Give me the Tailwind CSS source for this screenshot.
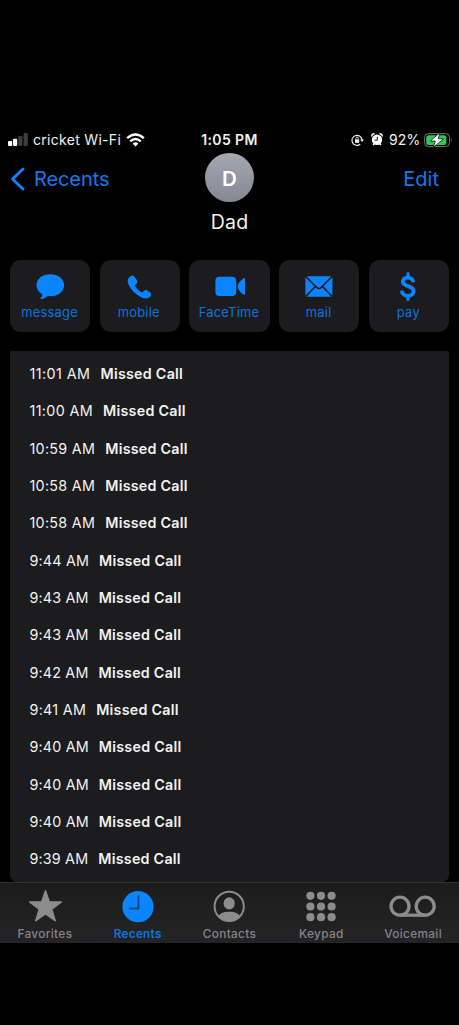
<!DOCTYPE html>
<html lang="en">
<head>
<meta charset="utf-8">
<title>Dad</title>
<script src="https://cdn.jsdelivr.net/npm/@tailwindcss/browser@4"></script>
</head>
<body class="bg-black">
<div class="w-[459px] h-[1025px] bg-black pt-[127px] flex flex-col overflow-hidden font-['Inter',sans-serif] text-[#f2f2f2]">
  <header class="h-6 shrink-0 grid grid-cols-3 items-center text-[14px] leading-6 whitespace-nowrap">
    <div class="flex items-center pl-2">
      <svg class="w-5 h-[13px] shrink-0" viewBox="0 0 20 13"><g fill="#fff"><rect x="0" y="8" width="4.2" height="5" rx="1"/><rect x="5" y="5.8" width="4.2" height="7.2" rx="1"/></g><g fill="#3c3c3c"><rect x="10.3" y="3" width="4.2" height="10" rx="1"/><rect x="15.6" y="0" width="4.2" height="13" rx="1"/></g></svg>
      <span class="ml-[5px] pt-px w-[88px] tracking-[.3px]">cricket Wi-Fi</span>
      <svg class="w-[19px] h-[14px] ml-[5px] shrink-0" viewBox="0 0 19 14" fill="none" stroke="#fff" stroke-width="2.4"><path d="M1.2 5.1Q9.5-2.2 17.8 5.1M4.2 8.3Q9.5 3.7 14.8 8.3"/><path d="M9.5 13.5 6.6 10.5Q9.5 8 12.4 10.5Z" fill="#fff" stroke="none"/></svg>
    </div>
    <div class="pt-px text-center font-semibold tracking-[.4px]">1:05 PM</div>
    <div class="flex items-center justify-end pr-[6px]">
      <svg class="w-[14px] h-3 shrink-0" viewBox="0 0 14 12" fill="none" stroke="#eee" stroke-width="1.2"><path d="M9.2 10.2A5 5 0 1 1 11 6"/><path d="M9.2 5.5h3.8L11.1 8Z" fill="#eee" stroke="none"/><rect x="4" y="5.4" width="4.2" height="3.4" fill="#eee" stroke="none"/><path d="M4.9 5.5V4.3a1.2 1.2 0 0 1 2.4 0v1.2" stroke-width=".9"/></svg>
      <svg class="w-3 h-[13px] ml-[6px] shrink-0" viewBox="0 0 12 13"><circle cx="6" cy="6.8" r="5.2" fill="#fff"/><path d="M.7 3.5Q.6.8 3.5.8M8.5.8q2.9 0 2.8 2.7M2 12l1.5-1.6M10 12l-1.5-1.6" fill="none" stroke="#fff" stroke-width="1.5"/><path d="M6.3 3.8v3.4H3.5" fill="none" stroke="#111" stroke-width="1"/></svg>
      <span class="ml-[6px] pt-px w-[31px] tracking-[.1px]">92%</span>
      <svg class="w-[29px] h-[16px] ml-[4px] shrink-0" viewBox="0 0 29 16"><rect x=".6" y="1.6" width="25" height="13" rx="4" fill="none" stroke="#777"/><rect x="2.2" y="3.2" width="20.2" height="9.8" rx="2.5" fill="#32c75a"/><path d="M27 5.8q1.8 2.2 0 4.5Z" fill="#777"/><path d="M15.7.6 6.4 9.1h5L9.2 15.6l10.4-8.8h-5.2Z" fill="#fff" stroke="#061b0b" stroke-width=".8"/></svg>
    </div>
  </header>

  <section class="h-[109px] shrink-0 grid grid-cols-3 pt-[2px]">
    <a class="flex items-center h-[51px] pl-[10px] text-[20px] text-[#0a7cf0]">
      <svg class="w-[15px] h-6 mr-[9px]" viewBox="0 0 15 24" fill="none" stroke="#0a84ff" stroke-width="2.8" stroke-linecap="round" stroke-linejoin="round"><path d="M13 2 2.5 12 13 22"/></svg><span class="pt-px tracking-[-.1px]">Recents</span>
    </a>
    <div class="flex flex-col items-center">
      <div class="w-[49px] h-[49px] rounded-full bg-linear-to-b from-[#a4a8b3] to-[#858891] flex items-center justify-center text-[20.5px] font-semibold text-white pt-[3px]">D</div>
      <h1 class="mt-[6px] text-[19.5px] leading-[28px] tracking-[.2px]">Dad</h1>
    </div>
    <a class="flex items-center justify-end h-[51px] pr-[20px] text-[20px] text-[#0a7cf0]"><span class="pt-px">Edit</span></a>
  </section>

  <nav class="h-[72px] shrink-0 mx-[10px] grid grid-cols-5 gap-[9.5px] text-[12.9px] leading-4 tracking-[.25px] text-[#0a74df]">
    <a class="bg-[#1c1c1e] rounded-[11px] flex flex-col items-center pt-[12px] pr-px">
      <svg class="w-8 h-8" viewBox="0 0 32 32" fill="#0a84ff"><path d="M16.2 2.2C8.4 2.2 2.5 6.8 2.5 13c0 4 2.1 7.2 5.5 9.1.4 1.6-.4 3-1.4 4-.5.6-.2 1.1.6 1 2.7-.2 4.8-1.4 6.5-3 9.2 1.1 16.4-3.7 16.4-11.1C30.1 6.8 24 2.2 16.2 2.2Z"/></svg><span class="pt-px">message</span>
    </a>
    <a class="bg-[#1c1c1e] rounded-[11px] flex flex-col items-center pt-[12px] pr-[2px]">
      <svg class="w-8 h-8" viewBox="0 0 32 32" fill="#0a84ff"><path d="M5.3 6.6C6.9 4 9.4 2.3 11.3 4.4l2.5 3.6c1 1.5.8 2.8-.3 3.8l-1.1 1c-.5.6-.4 1.1 0 1.7 1.5 2.4 3.5 4.4 5.8 5.7.7.4 1.2.4 1.7-.1l1.1-1.1c1.1-1.1 2.4-1.2 3.7-.3l2.4 1.7c1.8 1.4 1 3.5-.8 4.9-2.5 2-5.9 1.3-9.5-.8-4.5-2.7-8.6-6.8-10.8-11.1-1.3-2.5-1.8-4.9-.7-6.8Z"/></svg><span class="pt-px">mobile</span>
    </a>
    <a class="bg-[#1c1c1e] rounded-[11px] flex flex-col items-center pt-[12px] pr-px">
      <svg class="w-8 h-8" viewBox="0 0 32 32" fill="#0a84ff"><rect x="2.4" y="4.8" width="20.8" height="19.2" rx="4"/><path d="M24.7 14.4c0-2.4 2-5.4 5.6-8 1.2-.8 2.2-.3 2.2.9v14.2c0 1.2-1 1.7-2.2.9-3.6-2.6-5.6-5.6-5.6-8Z"/></svg><span class="pt-px">FaceTime</span>
    </a>
    <a class="bg-[#1c1c1e] rounded-[11px] flex flex-col items-center pt-[12px] pr-px">
      <svg class="w-8 h-8" viewBox="0 0 32 32"><rect x="2.4" y="4.2" width="27" height="20.5" rx="2" fill="#0a84ff"/><path d="m2.4 4.2 11.2 11.2q2.3 2.3 4.6 0L29.4 4.2M2.4 24.7l9.7-10M29.4 24.7l-9.7-10" fill="none" stroke="#1c1c1e" stroke-width="1.6"/></svg><span class="pt-px">mail</span>
    </a>
    <a class="bg-[#1c1c1e] rounded-[11px] flex flex-col items-center pt-[12px] pr-px">
      <svg class="w-8 h-8" viewBox="0 0 32 32" fill="none" stroke="#0a84ff" stroke-width="3.8"><path d="M16 1.7v4M16 23.5v4" stroke-width="3.2" stroke-linecap="round"/><path d="M21.4 10.2C20.8 3.9 10.8 4.4 10.8 9.5c0 6 10.8 3.3 10.8 9.7 0 6.2-11.4 6.2-11.8-.6"/></svg><span class="pt-px">pay</span>
    </a>
  </nav>

  <main class="mt-[19px] mx-[10px] h-[531px] shrink-0 bg-[#1c1c1e] rounded-t-[1px] rounded-b-[7px] pt-[4px] pl-[19.5px] text-[14.3px]">
    <ul class="[&>li]:h-[37.35px] [&>li]:flex [&>li]:items-center [&>li]:gap-[10px] tracking-[.18px] [&_b]:font-semibold [&_b]:tracking-[.25px]">
      <li><span class="tracking-[.45px]">11:01 AM</span><b>Missed Call</b></li>
      <li><span class="tracking-[.37px]">11:00 AM</span><b>Missed Call</b></li>
      <li><span class="tracking-[.3px]">10:59 AM</span><b>Missed Call</b></li>
      <li><span class="tracking-[.3px]">10:58 AM</span><b>Missed Call</b></li>
      <li><span class="tracking-[.3px]">10:58 AM</span><b>Missed Call</b></li>
      <li><span>9:44 AM</span><b>Missed Call</b></li>
      <li><span>9:43 AM</span><b>Missed Call</b></li>
      <li><span>9:43 AM</span><b>Missed Call</b></li>
      <li><span>9:42 AM</span><b>Missed Call</b></li>
      <li><span class="tracking-[.3px]">9:41 AM</span><b>Missed Call</b></li>
      <li><span>9:40 AM</span><b>Missed Call</b></li>
      <li><span>9:40 AM</span><b>Missed Call</b></li>
      <li><span>9:40 AM</span><b>Missed Call</b></li>
      <li><span>9:39 AM</span><b>Missed Call</b></li>
    </ul>
  </main>

  <footer class="h-[61px] shrink-0 border-t border-[#333335] bg-linear-to-b from-[#1c1c1c] to-[#242426] grid grid-cols-5 text-[11.8px] leading-[15px] font-medium tracking-[.35px] text-[#858585]">
    <a class="flex flex-col items-center pt-[5px] pr-[2px]">
      <svg class="w-9 h-[38px]" viewBox="0 0 36 38" fill="#8c8c8c" stroke="#8c8c8c" stroke-width="1.2" stroke-linejoin="round"><path d="m18.5 2.5 3.9 11.2 12.1.2-9.6 7.3 3.5 11.7-9.9-6.9-9.9 6.9 3.5-11.7-9.6-7.3 12.1-.2Z"/></svg><span class="pt-px">Favorites</span>
    </a>
    <a class="flex flex-col items-center pt-[5px] text-[#0a74df] font-semibold">
      <svg class="w-9 h-[38px]" viewBox="0 0 36 38"><circle cx="18" cy="18.7" r="15.6" fill="#0a84ff"/><path d="M18.5 8v12.5H10" fill="none" stroke="#174675" stroke-width="1.8" stroke-linecap="round"/></svg><span class="pt-px tracking-[.25px]">Recents</span>
    </a>
    <a class="flex flex-col items-center pt-[5px]">
      <svg class="w-9 h-[38px]" viewBox="0 0 36 38"><circle cx="18.2" cy="18.4" r="14.6" fill="none" stroke="#8c8c8c" stroke-width="2"/><ellipse cx="18.2" cy="15.4" rx="5.6" ry="6.2" fill="#8c8c8c"/><path d="M7.5 28.2C10 22.4 26.4 22.4 28.9 28.2 22.7 34.8 13.7 34.8 7.5 28.2Z" fill="#8c8c8c"/></svg><span class="pt-px">Contacts</span>
    </a>
    <a class="flex flex-col items-center pt-[5px]">
      <svg class="w-9 h-[38px]" viewBox="0 0 36 38" fill="#8c8c8c"><circle cx="7.4" cy="7.8" r="4.1"/><circle cx="18" cy="7.8" r="4.1"/><circle cx="28.6" cy="7.8" r="4.1"/><circle cx="7.4" cy="18.5" r="4.1"/><circle cx="18" cy="18.5" r="4.1"/><circle cx="28.6" cy="18.5" r="4.1"/><circle cx="7.4" cy="29.2" r="4.1"/><circle cx="18" cy="29.2" r="4.1"/><circle cx="28.6" cy="29.2" r="4.1"/></svg><span class="pt-px">Keypad</span>
    </a>
    <a class="flex flex-col items-center pt-[5px]">
      <svg class="w-12 h-[38px]" viewBox="0 0 48 38" fill="none" stroke="#8c8c8c" stroke-width="3.3"><circle cx="11" cy="18.2" r="9"/><circle cx="36.2" cy="18.2" r="9"/><path d="M11 27.2h25.2"/></svg><span class="pt-px">Voicemail</span>
    </a>
  </footer>
</div>
</body>
</html>
